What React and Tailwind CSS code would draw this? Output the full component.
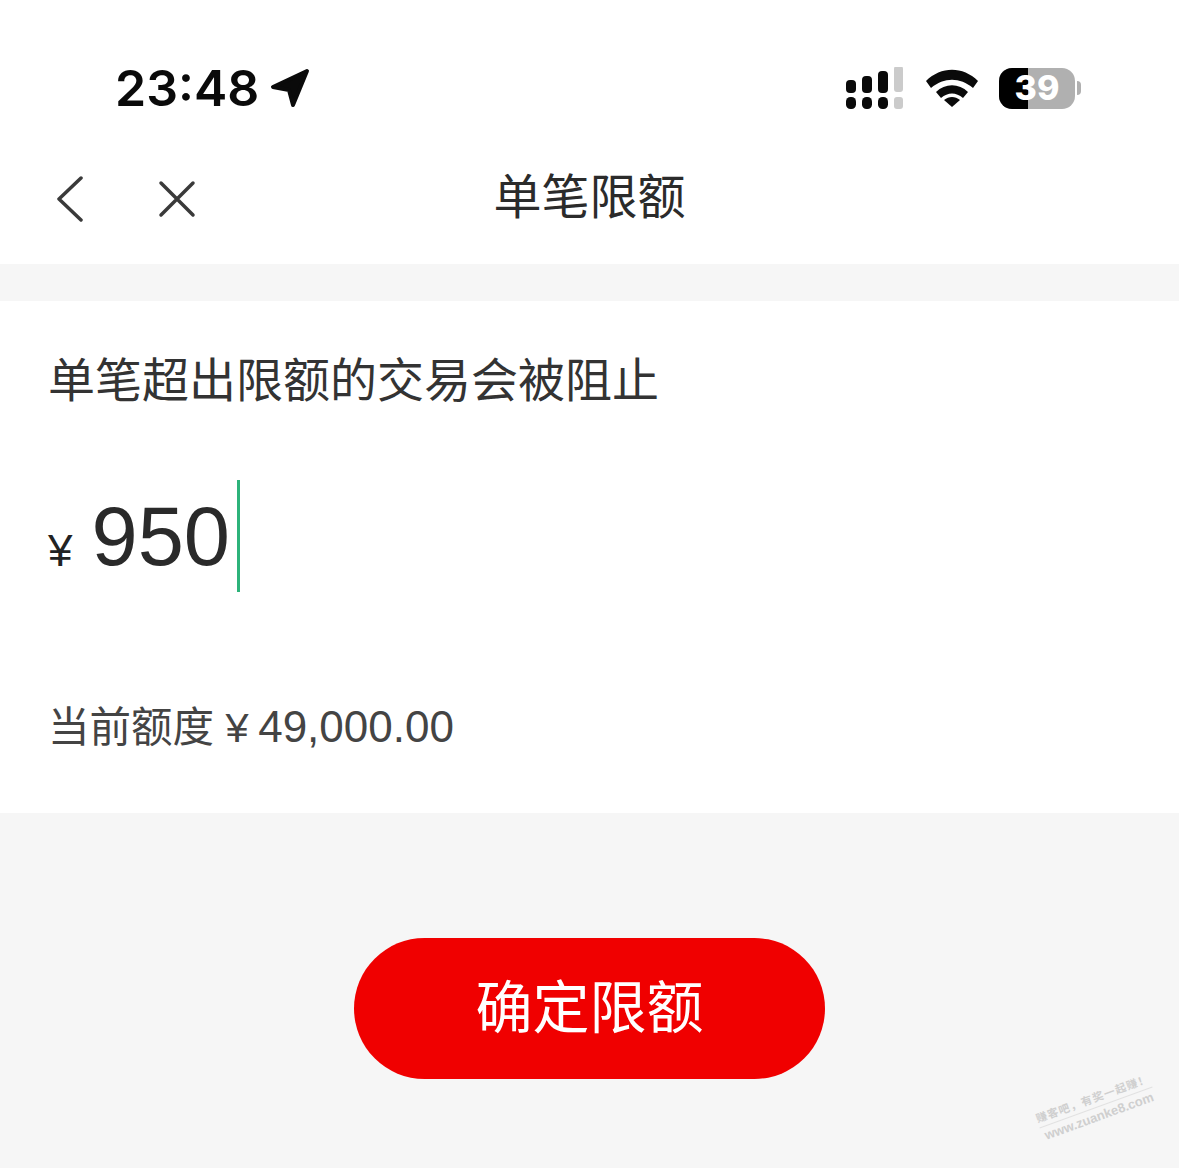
import React from "react";

const cjk = "font-['Liberation_Sans','Noto_Sans_CJK_SC',sans-serif]";

function Signal() {
  return (
    <svg width="60" height="42" viewBox="0 0 60 42">
      <rect x="1" y="13" width="10" height="13" rx="4" fill="#0a0a0a" />
      <rect x="17" y="9" width="10" height="17" rx="4" fill="#0a0a0a" />
      <rect x="33" y="4" width="10" height="22" rx="4" fill="#0a0a0a" />
      <rect x="49" y="-1" width="9" height="26" rx="3" fill="#cbcbcb" />
      <rect x="1" y="30" width="10" height="12" rx="4.5" fill="#0a0a0a" />
      <rect x="17" y="30" width="10" height="12" rx="4.5" fill="#0a0a0a" />
      <rect x="33" y="30" width="10" height="12" rx="4.5" fill="#0a0a0a" />
      <rect x="49" y="30" width="9" height="12" rx="3" fill="#cbcbcb" />
    </svg>
  );
}

function Wifi() {
  return (
    <svg width="52" height="38" viewBox="0 0 52 38">
      <path d="M0 12 C15 -3 37 -3 52 12 L47 19 C34 8 18 8 5 19 Z" fill="#0a0a0a" />
      <path d="M10 23 C19 14 33 14 42 23 L37 29 C30 23 22 23 15 29 Z" fill="#0a0a0a" />
      <path d="M18 31 C23 27 29 27 34 31 L26 38 Z" fill="#0a0a0a" />
    </svg>
  );
}

function Battery() {
  return (
    <div className="flex items-center gap-[2px]">
      <div className="relative flex h-[41px] w-[76px] items-center justify-center overflow-hidden rounded-[13px] bg-[#b0b0b0]">
        <div className="absolute inset-y-0 left-0 w-[29px] bg-black" />
        <span className="relative font-['Inter',sans-serif] text-[34px] leading-none font-extrabold text-white">39</span>
      </div>
      <div className="h-[14px] w-[4px] rounded-r-full bg-[#b0b0b0]" />
    </div>
  );
}

export default function App() {
  return (
    <div className={`relative flex h-[1168px] flex-col overflow-hidden bg-[#f6f6f6] ${cjk}`}>
      {/* status bar */}
      <div className="flex h-[135px] items-start justify-between bg-white pt-[60px] pr-[98px] pl-[115px]">
        <div className="flex items-center gap-[11px]">
          <span className="font-['Inter',sans-serif] text-[50px] leading-[56px] font-semibold text-[#0a0a0a]">23:48</span>
          <svg width="40" height="40" viewBox="0 0 40 40">
            <path d="M37 3 L3 19 L19 22 L23 37 Z" fill="#0a0a0a" stroke="#0a0a0a" strokeWidth="4" strokeLinejoin="round" />
          </svg>
        </div>
        <div className="flex items-center gap-[21px] pt-[7px]">
          <Signal />
          <Wifi />
          <Battery />
        </div>
      </div>

      {/* nav */}
      <div className="relative flex h-[129px] items-center justify-center bg-white pb-[3px]">
        <div className="absolute top-[41px] left-[56px] flex items-center gap-[74px]">
          <svg width="28" height="46" viewBox="0 0 28 46">
            <path d="M25 2 L3 23 L25 44" fill="none" stroke="#3a3a3a" strokeWidth="3.5" strokeLinecap="round" strokeLinejoin="round" />
          </svg>
          <svg width="38" height="38" viewBox="0 0 38 38">
            <path d="M3 3 L35 35 M35 3 L3 35" fill="none" stroke="#3a3a3a" strokeWidth="3.5" strokeLinecap="round" />
          </svg>
        </div>
        <h1 className="text-[48px] leading-[56px] font-normal text-[#2b2b2b]">单笔限额</h1>
      </div>

      {/* form panel */}
      <div className="mt-[37px] flex h-[512px] flex-col bg-white pt-[52px] pl-[48px]">
        <p className="text-[47px] leading-[56px] text-[#333333]">单笔超出限额的交易会被阻止</p>
        <div className="mt-[71px] flex h-[112px] items-center">
          <span className="mt-[30px] text-[44px] leading-none text-[#222222]">¥</span>
          <span className="ml-[19px] text-[83px] leading-none text-[#2a2a2a]">950</span>
          <div className="ml-[7px] h-[112px] w-[3px] bg-[#2db37a]" />
        </div>
        <p className="mt-[111px] text-[41.5px] leading-[48px] text-[#444444]">
          当前额度 ¥ <span className="ml-[-2px] text-[44px]">49,000.00</span>
        </p>
      </div>

      {/* confirm button */}
      <div className="mt-[125px] flex justify-center">
        <button className="h-[141px] w-[471px] rounded-full bg-[#f00000] text-[57px] text-white">确定限额</button>
      </div>

      {/* watermark */}
      <div className="absolute top-[1090px] left-[1036px] -rotate-[20deg] text-center text-[#cfcfcf]">
        <div className="border-b border-[#e2e2e2] text-[11px] leading-[17px] font-bold tracking-[1px]">赚客吧，有奖一起赚！</div>
        <div className="text-[13px] leading-[17px] font-bold">www.zuanke8.com</div>
      </div>
    </div>
  );
}
